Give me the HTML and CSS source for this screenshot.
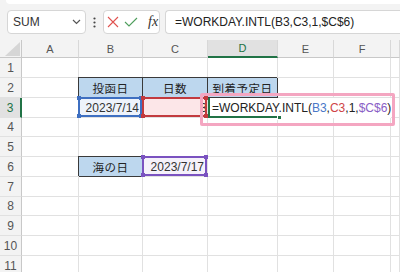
FILE: index.html
```html
<!DOCTYPE html>
<html lang="ja">
<head>
<meta charset="utf-8">
<link rel="stylesheet" href="styles.css">
</head>
<body>
<div class="ribbon-edge"></div>
<div class="fbar">
  <div class="namebox"><span>SUM</span>
    <svg width="9" height="6" viewBox="0 0 9 6"><path d="M1 1 L4.5 4.5 L8 1" fill="none" stroke="#555" stroke-width="1.2"/></svg>
  </div>
  <div class="dots"><svg width="3" height="11" viewBox="0 0 3 11"><circle cx="1.5" cy="1.5" r="1.1" fill="#444"/><circle cx="1.5" cy="5.5" r="1.1" fill="#444"/><circle cx="1.5" cy="9.5" r="1.1" fill="#444"/></svg></div>
  <div class="fxbox">
    <svg class="ic" width="12" height="12" viewBox="0 0 12 12"><path d="M1 1 L11 11 M11 1 L1 11" stroke="#e0524f" stroke-width="1.1" fill="none"/></svg>
    <svg class="ic" width="14" height="10" viewBox="0 0 14 10"><path d="M1 5 L5 9 L13 1" stroke="#4f9e5d" stroke-width="1.1" fill="none"/></svg>
    <span class="fx">fx</span>
  </div>
  <div class="formula">=WORKDAY.INTL(B3,C3,1,$C$6)</div>
</div>
<div class="sheet">
  <div class="c ch corner"><svg width="15" height="14" viewBox="0 0 15 14"><path d="M15 0 L15 14 L0 14 Z" fill="#d6d6d6"/></svg></div>
  <div class="c ch">A</div><div class="c ch">B</div><div class="c ch">C</div><div class="c ch act">D</div><div class="c ch">E</div><div class="c ch">F</div><div class="c ch"></div>

  <div class="c rh">1</div><div class="c"></div><div class="c"></div><div class="c"></div><div class="c"></div><div class="c"></div><div class="c"></div><div class="c"></div>

  <div class="c rh">2</div><div class="c"></div><div class="c hdr">投函日</div><div class="c hdr">日数</div><div class="c hdr">到着予定日</div><div class="c"></div><div class="c"></div><div class="c"></div>

  <div class="c rh act">3</div><div class="c"></div>
  <div class="c num ref-b">2023/7/14<div class="rng"><i class="h tl"></i><i class="h tr"></i><i class="h bl"></i><i class="h br"></i></div></div>
  <div class="c num ref-c">3<div class="rng"><i class="h tl"></i><i class="h tr"></i><i class="h bl"></i><i class="h br"></i></div></div>
  <div class="c"></div><div class="c"></div><div class="c"></div><div class="c"></div>

  <div class="c rh">4</div><div class="c"></div><div class="c"></div><div class="c"></div><div class="c"></div><div class="c"></div><div class="c"></div><div class="c"></div>
  <div class="c rh">5</div><div class="c"></div><div class="c"></div><div class="c"></div><div class="c"></div><div class="c"></div><div class="c"></div><div class="c"></div>

  <div class="c rh">6</div><div class="c"></div><div class="c hdr">海の日</div>
  <div class="c num ref-p">2023/7/17<div class="rng"><i class="h tl"></i><i class="h tr"></i><i class="h bl"></i><i class="h br"></i></div></div>
  <div class="c"></div><div class="c"></div><div class="c"></div><div class="c"></div>

  <div class="c rh">7</div><div class="c"></div><div class="c"></div><div class="c"></div><div class="c"></div><div class="c"></div><div class="c"></div><div class="c"></div>
  <div class="c rh">8</div><div class="c"></div><div class="c"></div><div class="c"></div><div class="c"></div><div class="c"></div><div class="c"></div><div class="c"></div>
  <div class="c rh">9</div><div class="c"></div><div class="c"></div><div class="c"></div><div class="c"></div><div class="c"></div><div class="c"></div><div class="c"></div>
  <div class="c rh">10</div><div class="c"></div><div class="c"></div><div class="c"></div><div class="c"></div><div class="c"></div><div class="c"></div><div class="c"></div>
  <div class="c rh">11</div><div class="c"></div><div class="c"></div><div class="c"></div><div class="c"></div><div class="c"></div><div class="c"></div><div class="c"></div>

  <div class="editor">=WORKDAY.INTL(<span class="fb">B3</span>,<span class="fc">C3</span>,1,<span class="fp">$C$6</span>)</div>
  <div class="active"><i class="fill"></i></div>
  <div class="callout"></div>
</div>
</body>
</html>
```

FILE: styles.css
```css
* { box-sizing: border-box; }
html, body { margin: 0; padding: 0; }
body {
  width: 400px;
  height: 272px;
  overflow: hidden;
  background: #f3f3f3;
  font-family: "Liberation Sans", "Noto Sans CJK JP", sans-serif;
  color: #222;
}
.ribbon-edge {
  height: 4px;
  margin-left: 6px;
  background: #fff;
  border-radius: 0 0 0 6px;
}
.fbar {
  display: flex;
  height: 24px;
  margin-top: 6px;
  padding-left: 7px;
}
.namebox {
  width: 79px;
  background: #fff;
  border: 1px solid #d6d6d6;
  border-radius: 4px;
  display: flex;
  align-items: center;
  justify-content: space-between;
  padding: 0 4px 0 5px;
  font-size: 12px;
  color: #333;
}
.dots {
  width: 17px;
  display: flex;
  align-items: center;
  justify-content: center;
}
.fxbox {
  width: 57px;
  background: #fff;
  border: 1px solid #d6d6d6;
  border-radius: 4px;
  display: flex;
  align-items: center;
  padding-left: 3px;
  gap: 5px;
}
.fx {
  font-family: "Liberation Serif", serif;
  font-style: italic;
  font-size: 14px;
  color: #333;
  margin-left: 5px;
}
.formula {
  flex: 1;
  margin-left: 5px;
  background: #fff;
  border: 1px solid #d6d6d6;
  border-right: none;
  border-radius: 4px 0 0 4px;
  padding-left: 9px;
  font-size: 12px;
  display: flex;
  align-items: center;
  color: #222;
}
.sheet {
  position: relative;
  margin-top: 6px;
  display: grid;
  grid-template-columns: 22px 57px 64px 65px 70px 56px 57px 9px;
  grid-template-rows: 18px 20px 20px 20px 19px 20px 20px 20px 19px 20px 20px 20px;
  background: #fff;
}
.c {
  border-right: 1px solid #e1e1e1;
  border-bottom: 1px solid #e1e1e1;
  font-size: 12px;
  display: flex;
  align-items: center;
  padding: 0 2px;
  white-space: nowrap;
  color: #333;
}
.ch {
  background: #f3f3f3;
  border-right-color: #d8d8d8;
  border-bottom-color: #c8c8c8;
  justify-content: center;
  color: #555;
  font-size: 11px;
}
.corner {
  justify-content: flex-end;
  align-items: flex-end;
  padding: 0 1px 1px 0;
  border-right-color: #c8c8c8;
}
.rh {
  background: #f3f3f3;
  border-right-color: #c8c8c8;
  justify-content: center;
  color: #555;
  font-size: 12px;
}
.ch.act {
  background: #e1e1e1;
  border-bottom: 2px solid #217346;
  color: #217346;
}
.rh.act {
  background: #e1e1e1;
  border-right: 2px solid #217346;
  color: #217346;
}
.hdr {
  background: #bdd7ee;
  border-right-color: #3a3a3a;
  border-bottom-color: #3a3a3a;
  box-shadow: -1px -1px 0 #3a3a3a;
  justify-content: center;
  font-size: 11.5px;
  letter-spacing: 0.5px;
  color: #222;
}
.num {
  justify-content: flex-end;
  padding-right: 3px;
  position: relative;
}
.ref-c.num { padding-right: 0; }
.rng {
  position: absolute;
  left: -1px;
  top: -1px;
  right: 0;
  bottom: 0;
  border: 2px solid;
}
.h {
  position: absolute;
  width: 4px;
  height: 4px;
  background: currentColor;
}
.tl { left: -3px; top: -3px; }
.tr { right: -3px; top: -3px; }
.bl { left: -3px; bottom: -3px; }
.br { right: -3px; bottom: -3px; }
.ref-b { background: #eef3fb; }
.ref-b .rng { border-color: #3e6fc1; color: #3e6fc1; }
.ref-c { background: #fce6e8; }
.ref-c .rng { border-color: #c23a3e; color: #c23a3e; }
.ref-p { background: #f5f1fa; }
.ref-p .rng { border-color: #7a52c0; color: #7a52c0; }
.editor {
  position: absolute;
  left: 210px;
  top: 58px;
  width: 181px;
  height: 20px;
  background: #fff;
  padding-left: 2px;
  font-size: 12px;
  line-height: 20px;
  white-space: nowrap;
  color: #222;
}
.fb { color: #4a78c8; }
.fc { color: #cf4446; }
.fp { color: #8b60c6; }
.active {
  position: absolute;
  left: 208px;
  top: 58px;
  width: 71px;
  height: 20px;
  border-left: 2px solid #217346;
  border-bottom: 2px solid #217346;
}
.fill {
  position: absolute;
  right: -3px;
  bottom: -4px;
  width: 5px;
  height: 5px;
  background: #217346;
  border: 1px solid #fff;
}
.callout {
  position: absolute;
  left: 200px;
  top: 53px;
  width: 195px;
  height: 33px;
  border: 3px solid #f4a6c1;
  border-radius: 2px;
}
```
